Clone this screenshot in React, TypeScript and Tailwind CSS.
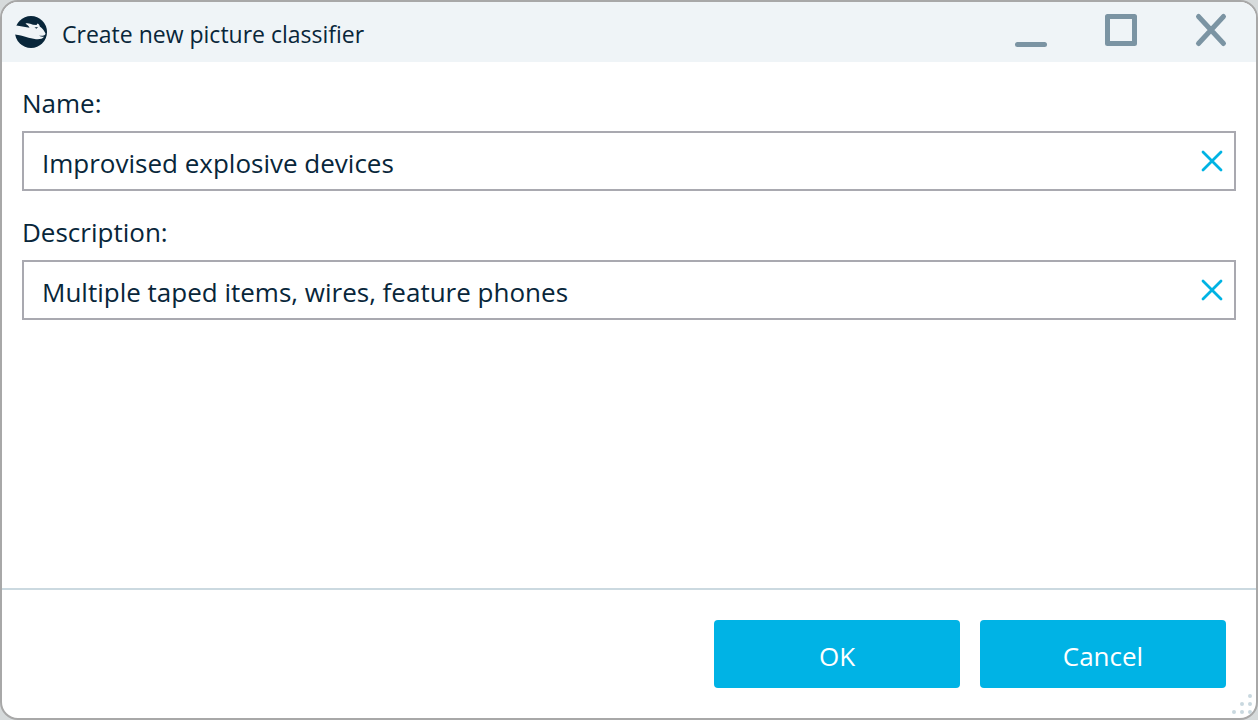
import { useId, useState } from 'react';

type TextFieldProps = {
  label: string;
  value: string;
  onChange: (value: string) => void;
};

function Logo() {
  return (
    <svg viewBox="0 0 32 32" className="size-8 shrink-0" aria-hidden="true">
      <circle cx="16" cy="16" r="16" fill="#08263a" />
      <path
        d="M-1 9.500 H1.500 L14.500 11.800 C13.500 9.500 12 9 10.500 7.500 C13 7 15.500 7.500 18 8.800 L21.500 9 L22.500 7.500 C24 8 24.500 9 24.800 10.500 C27.500 12.500 29.500 15 30.500 17.500 C30.500 19.500 28.500 20 24 19.800 C26 20.500 27.500 21 29 20.800 C27.500 23 24.500 23.500 21 23.200 C14 22.500 8 19.500 -1 18.500 Z"
        fill="#eff4f7"
      />
      <path d="M19.500 11.500 L23 11 L21.500 12.800 Z" fill="#08263a" />
    </svg>
  );
}

function TitleBar({ title }: { title: string }) {
  return (
    <header className="flex h-15 items-center bg-[#eff4f7] pl-[13px] pr-[27px]">
      <Logo />
      <h1 className="ml-[15px] flex-1 pt-1 text-[23px] leading-8">{title}</h1>
      <div className="flex gap-[54px] pb-1 text-[#7b94a3]">
        <button type="button" aria-label="Minimize">
          <svg viewBox="0 0 36 36" className="size-9" fill="none" stroke="currentColor" strokeWidth="5" strokeLinecap="round">
            <path d="M4.500 32.500H31.500" />
          </svg>
        </button>
        <button type="button" aria-label="Maximize">
          <svg viewBox="0 0 36 36" className="size-9" fill="none" stroke="currentColor" strokeWidth="5" strokeLinejoin="round">
            <rect x="4.500" y="4.500" width="27" height="27" />
          </svg>
        </button>
        <button type="button" aria-label="Close">
          <svg viewBox="0 0 36 36" className="size-9" fill="none" stroke="currentColor" strokeWidth="5" strokeLinecap="round">
            <path d="M5.500 4.500L30.500 31.500M30.500 4.500L5.500 31.500" />
          </svg>
        </button>
      </div>
    </header>
  );
}

function TextField({ label, value, onChange }: TextFieldProps) {
  const id = useId();

  return (
    <div>
      <label htmlFor={id} className="block text-[26px] leading-9">{label}</label>
      <div className="mt-[10px] flex h-15 items-center border-2 border-[#a9a9b0] bg-white pl-[18px] pr-[10px]">
        <input
          id={id}
          type="text"
          value={value}
          onChange={(e) => onChange(e.target.value)}
          className="min-w-0 flex-1 pt-1 text-[26px] leading-9 outline-none"
        />
        <button type="button" aria-label={`Clear ${label}`} onClick={() => onChange('')} className="text-[#00b3e3]">
          <svg viewBox="0 0 24 24" className="size-6" fill="none" stroke="currentColor" strokeWidth="2.800" strokeLinecap="round">
            <path d="M3 3L21 21M21 3L3 21" />
          </svg>
        </button>
      </div>
    </div>
  );
}

function ResizeGrip() {
  return (
    <svg viewBox="0 0 20 20" className="absolute bottom-1 right-1 size-5" fill="#c9d8df" aria-hidden="true">
      <circle cx="18" cy="2" r="2" />
      <circle cx="10" cy="10" r="2" />
      <circle cx="18" cy="10" r="2" />
      <circle cx="2" cy="18" r="2" />
      <circle cx="10" cy="18" r="2" />
      <circle cx="18" cy="18" r="2" />
    </svg>
  );
}

const actionCls = 'h-17 w-[246px] rounded-[4px] bg-[#00b3e5] pt-1 text-[26px] leading-9 text-white hover:bg-[#00a3d1]';

export default function App() {
  const [name, setName] = useState('Improvised explosive devices');
  const [description, setDescription] = useState('Multiple taped items, wires, feature phones');

  return (
    <div className="flex min-h-screen bg-[#d6dadb] font-['Open_Sans','Noto_Sans',sans-serif] text-[#08263a]">
      <form
        onSubmit={(e) => e.preventDefault()}
        className="relative flex flex-1 flex-col overflow-hidden rounded-[18px] border-2 border-[#a8a8a8] bg-white"
      >
        <TitleBar title="Create new picture classifier" />

        <main className="flex flex-1 flex-col gap-[23px] px-5 pt-[23px]">
          <TextField label="Name:" value={name} onChange={setName} />
          <TextField label="Description:" value={description} onChange={setDescription} />
        </main>

        <footer className="flex justify-end gap-5 border-t-2 border-[#cbd9e0] px-[30px] py-[30px]">
          <button type="submit" className={actionCls}>OK</button>
          <button type="button" className={actionCls}>Cancel</button>
        </footer>

        <ResizeGrip />
      </form>
    </div>
  );
}
